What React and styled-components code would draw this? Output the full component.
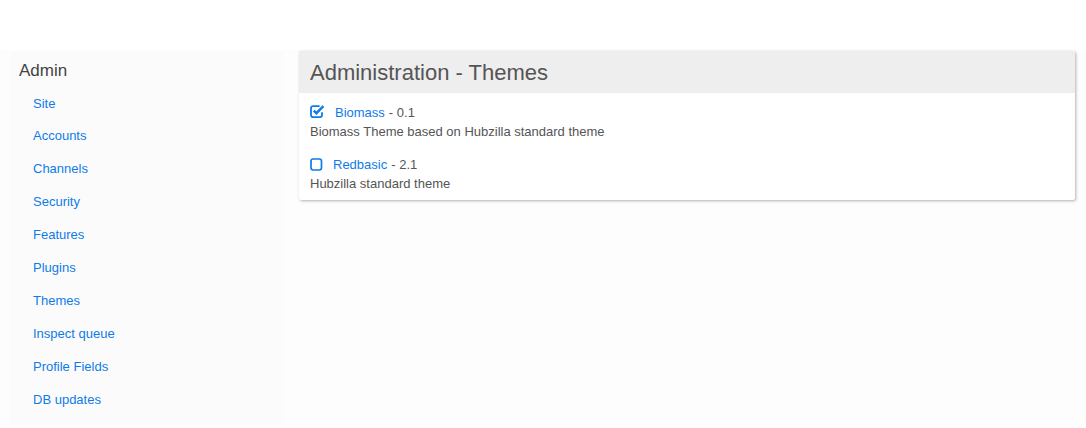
import React from 'react';
import styled, { createGlobalStyle } from 'styled-components';

const GlobalStyle = createGlobalStyle`
  html, body {
    margin: 0;
    padding: 0;
    background: #fff;
    font-family: "Liberation Sans", Arial, sans-serif;
    font-size: 13px;
    color: #444;
  }
`;

const LINK = '#0f7be8';

const TopSpace = styled.div`
  height: 50px;
  background: #fff;
`;

const Main = styled.div`
  display: flex;
  align-items: flex-start;
  gap: 15px;
  padding: 0 11px 0 11px;
  min-height: 378px;
  background: #fdfdfd;
`;

const Aside = styled.aside`
  width: 273px;
  flex: 0 0 273px;
  margin-top: 2px;
  height: 372px;
  background: #fbfbfb;
  box-sizing: border-box;
  padding: 9px 8px 0;
`;

const AsideTitle = styled.h3`
  margin: 0 0 6.5px;
  font-size: 17px;
  font-weight: normal;
  color: #444;
  line-height: 20px;
`;

const NavList = styled.ul`
  list-style: none;
  margin: 0;
  padding: 0 0 0 14px;
`;

const NavItem = styled.li`
  height: 32.9px;
  line-height: 32.9px;

  a {
    color: ${LINK};
    text-decoration: none;
    font-size: 13px;
  }
`;

const Panel = styled.section`
  flex: 1;
  margin-top: 1px;
  background: #fff;
  box-shadow: 1px 1px 3px rgba(0, 0, 0, 0.3);
  border-radius: 2px;
`;

const PanelHead = styled.div`
  background: #eee;
  height: 42px;
  display: flex;
  align-items: center;
  padding: 2px 11px 0;
  box-sizing: border-box;
`;

const PanelTitle = styled.h2`
  margin: 0;
  font-size: 22px;
  font-weight: normal;
  color: #555;
`;

const PanelBody = styled.div`
  padding: 9px 11px 7px;
`;

const Theme = styled.div`
  & + & {
    margin-top: 13px;
  }
`;

const ThemeLine = styled.div`
  display: flex;
  align-items: center;
  height: 20px;
  color: #555;

  a {
    color: ${LINK};
    text-decoration: none;
    margin-left: 10px;
    margin-right: 4px;
  }
`;

const Desc = styled.div`
  color: #555;
  line-height: 19px;
`;

const CheckedIcon = () => (
  <svg width="15" height="15" viewBox="0 0 15 15" fill="none" stroke={LINK} style={{ marginTop: -2 }}>
    <path d="M12 8.3v2.8a2 2 0 0 1-2 2H3a2 2 0 0 1-2-2V4.1a2 2 0 0 1 2-2h6.6" strokeWidth="1.8" />
    <path d="M3.8 6.6l2.6 2.6L13.4 2.2" strokeWidth="2.4" />
  </svg>
);

const EmptyIcon = () => (
  <svg width="13" height="13" viewBox="0 0 13 13" fill="none" stroke={LINK}>
    <rect x="1" y="1" width="10.5" height="11" rx="2.2" strokeWidth="1.7" />
  </svg>
);

const nav = ['Site', 'Accounts', 'Channels', 'Security', 'Features', 'Plugins', 'Themes', 'Inspect queue', 'Profile Fields', 'DB updates'];

const themes = [
  { name: 'Biomass', version: '0.1', desc: 'Biomass Theme based on Hubzilla standard theme', on: true },
  { name: 'Redbasic', version: '2.1', desc: 'Hubzilla standard theme', on: false },
];

export default function App() {
  return (
    <>
      <GlobalStyle />
      <TopSpace />
      <Main>
        <Aside>
          <AsideTitle>Admin</AsideTitle>
          <NavList>
            {nav.map(n => (
              <NavItem key={n}>
                <a href="#">{n}</a>
              </NavItem>
            ))}
          </NavList>
        </Aside>
        <Panel>
          <PanelHead>
            <PanelTitle>Administration - Themes</PanelTitle>
          </PanelHead>
          <PanelBody>
            {themes.map(t => (
              <Theme key={t.name}>
                <ThemeLine>
                  {t.on ? <CheckedIcon /> : <EmptyIcon />}
                  <a href="#">{t.name}</a>- {t.version}
                </ThemeLine>
                <Desc>{t.desc}</Desc>
              </Theme>
            ))}
          </PanelBody>
        </Panel>
      </Main>
    </>
  );
}
